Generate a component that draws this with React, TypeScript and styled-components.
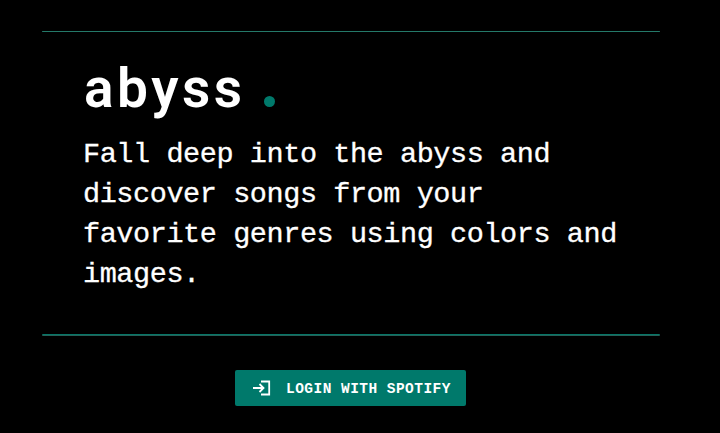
import styled, { createGlobalStyle } from "styled-components";

const GlobalStyle = createGlobalStyle`
  * { box-sizing: border-box; }
  body { margin: 0; background: #000; overflow: hidden; }
`;

const Page = styled.main`
  display: flex;
  flex-direction: column;
  width: 720px;
  height: 433px;
  padding: 31px 60px 0 42px;
  background: #000;
  color: #fff;
  font-family: "Liberation Mono", monospace;
`;

const Rule = styled.div<{ $thick?: boolean }>`
  flex: none;
  height: ${(p) => (p.$thick ? 2 : 1)}px;
  background: ${(p) => (p.$thick ? "linear-gradient(#087567 50%, #246158 50%)" : "#247969")};
  border-radius: 1px;
`;

const Intro = styled.section`
  height: 302px;
  padding: 20px 0 0 42px;
`;

const Title = styled.h1`
  display: flex;
  align-items: baseline;
  margin: 0;
  height: 83px;
  font: 600 55px/72px Roboto, sans-serif;
  letter-spacing: 3.5px;
`;

const Dot = styled.span`
  width: 11px;
  height: 11px;
  margin-left: 18.5px;
  border-radius: 50%;
  background: #00796b;
`;

const Tagline = styled.p`
  margin: 0 0 0 -1px;
  font-size: 28.5px;
  line-height: 40px;
  letter-spacing: -0.42px;
  -webkit-text-stroke: 0.3px #fff;
`;

const Line = styled.span`
  display: block;
  white-space: nowrap;
`;

const LoginButton = styled.button`
  display: flex;
  align-items: center;
  width: 231px;
  height: 36px;
  margin: 34px 0 0 193px;
  padding: 0 0 0 17px;
  border: 0;
  border-radius: 2px;
  background: #00796b;
  color: #fff;
  font: 700 14.5px/24px "Liberation Mono", monospace;
  letter-spacing: 0.46px;
  white-space: nowrap;
`;

const LoginLabel = styled.span`
  padding-top: 2px;
`;

const LoginIcon = styled.svg`
  flex: none;
  width: 20px;
  height: 16px;
  margin-right: 14px;
`;

export default function App() {
  return (
    <>
      <GlobalStyle />
      <Page>
        <Rule />
        <Intro>
          <Title>
            abyss
            <Dot />
          </Title>
          <Tagline>
            <Line>Fall deep into the abyss and</Line>
            <Line>discover songs from your</Line>
            <Line>favorite genres using colors and</Line>
            <Line>images.</Line>
          </Tagline>
        </Intro>
        <Rule $thick />
        <LoginButton>
          <LoginIcon viewBox="0 0 20 16" fill="none" stroke="currentColor" strokeWidth="1.8">
            <path d="M1 8h10M7.5 4 11.5 8l-4 4" />
            <path d="M9 1.5h8.2v13H9" />
          </LoginIcon>
          <LoginLabel>LOGIN WITH SPOTIFY</LoginLabel>
        </LoginButton>
      </Page>
    </>
  );
}
